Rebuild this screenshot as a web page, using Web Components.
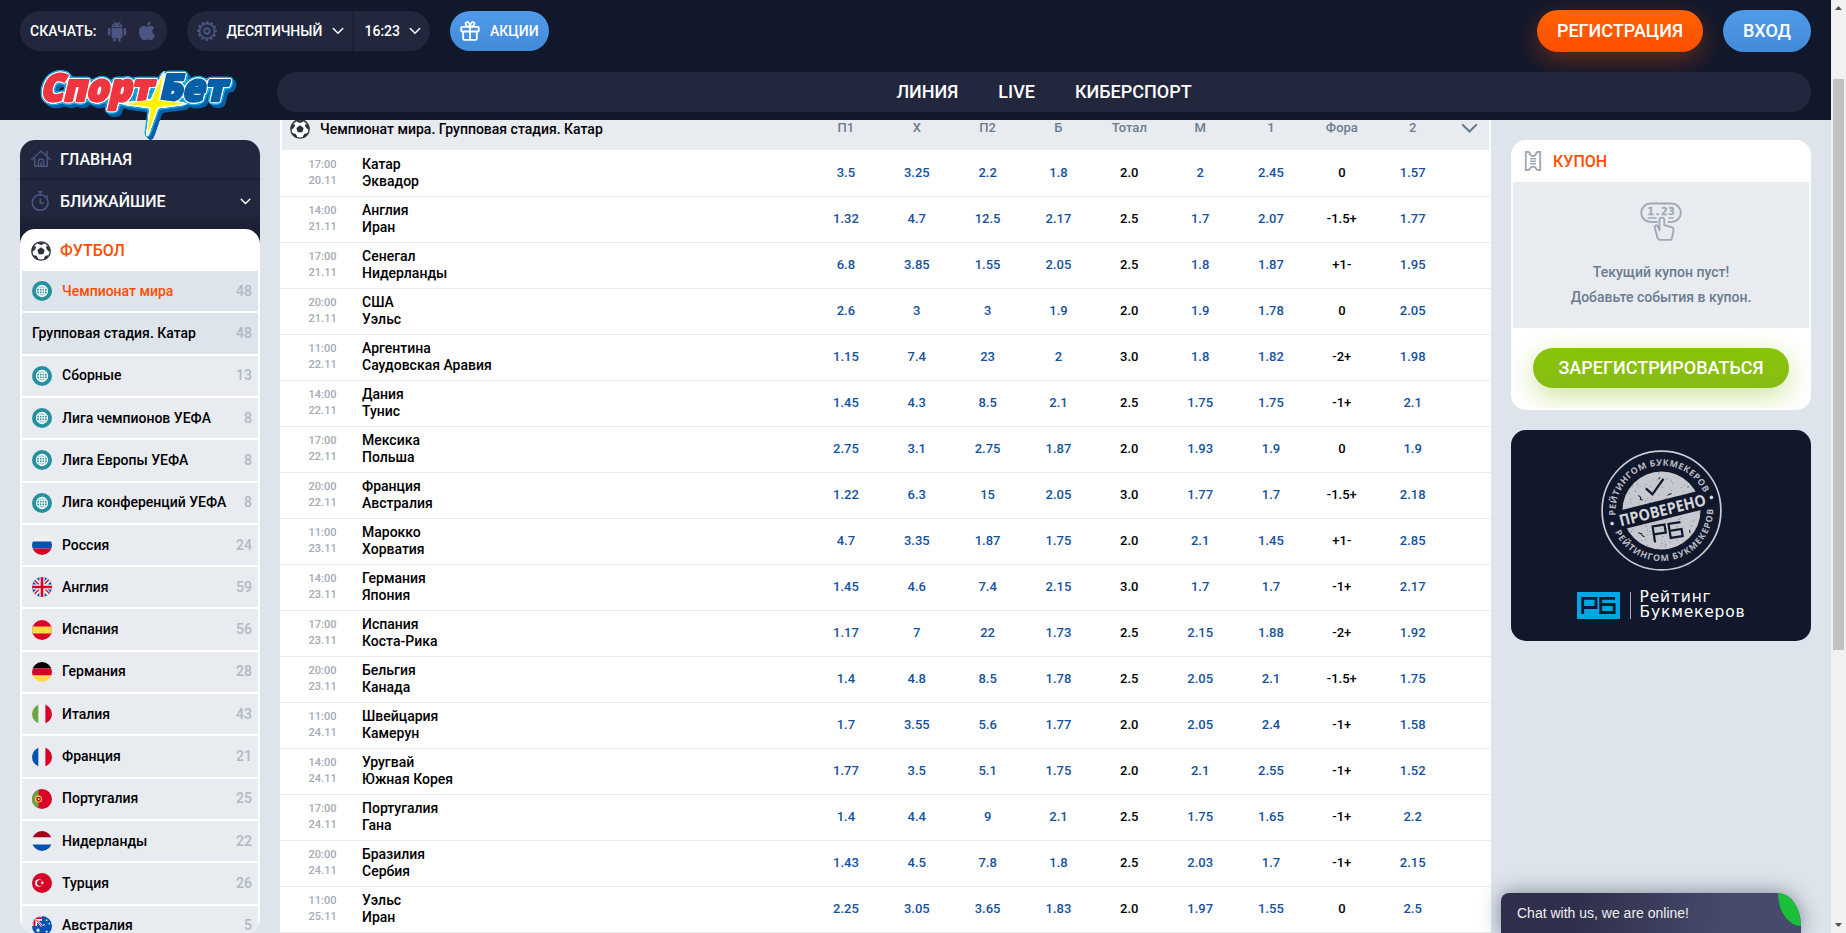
<!DOCTYPE html>
<html lang="ru">
<head>
<meta charset="utf-8">
<title>СпортБет</title>
<style>
html,body{margin:0;height:100%;overflow:hidden}
body{font-family:Roboto,"Liberation Sans",sans-serif;font-weight:500;font-size:14px;color:#000;background:#dde4eb}
</style>
</head>
<body>
<sb-app></sb-app>
<script>
const define=(name,css,html)=>customElements.define(name,class extends HTMLElement{
  constructor(){super();this.attachShadow({mode:'open'})}
  connectedCallback(){
    const body=typeof html==='function'?html(this):html;
    this.shadowRoot.innerHTML=`<style>*{box-sizing:border-box}svg{display:block;flex:none}${css}</style>${body}`;
  }
});
const at=(el,n)=>el.getAttribute(n)||'';

/* ---------- icons ---------- */
const P={
 android:[24,'<g fill="currentColor"><path d="M6 8.8h12v9.4a1.4 1.4 0 0 1-1.4 1.4H7.4A1.4 1.4 0 0 1 6 18.200z"/><path d="M6 8a6 5 0 0 1 12 0z"/><rect x="2" y="8.800" width="2.800" height="8" rx="1.400"/><rect x="19.200" y="8.800" width="2.800" height="8" rx="1.400"/><rect x="8" y="17" width="2.700" height="6.500" rx="1.300"/><rect x="13.300" y="17" width="2.700" height="6.500" rx="1.300"/></g><path d="M8.300 1l1.400 2.600M15.700 1l-1.400 2.600" stroke="currentColor"/><circle cx="9.400" cy="5.700" r=".8" fill="#22273d"/><circle cx="14.600" cy="5.700" r=".8" fill="#22273d"/>'],
 apple:[24,'<g fill="currentColor"><path d="M12.300 6.800c1.100 0 2.300-1 4.200-1 1.700 0 3.400.8 4.500 2.400-3.700 2.200-3.100 7.300.7 8.800-1.300 3.300-3.200 6.200-5.200 6.200-1.500 0-2-.9-3.900-.9s-2.500.9-3.900.9C5.500 23.200 2.300 17.500 2.300 13c0-4.600 2.900-7.100 5.800-7.100 1.800 0 3.200.9 4.200.9z"/><path d="M16.700.3c.3 2.600-1.900 5.100-4.600 5.100-.3-2.500 2-4.900 4.600-5.100z"/></g>'],
 gear:[24,'<g fill="none" stroke="currentColor"><circle cx="12" cy="12" r="3.300" stroke-width="2.200"/><circle cx="12" cy="12" r="8.900" stroke-width="2"/><circle cx="12" cy="12" r="10.700" stroke-width="2.200" stroke-dasharray="3.200 2.402" transform="rotate(-8 12 12)"/></g>'],
 chev:[12,'<path d="M1.300 3.500 6 8.200l4.700-4.700" fill="none" stroke="currentColor" stroke-width="1.500" stroke-linecap="round"/>'],
 gift:[24,'<g fill="none" stroke="currentColor" stroke-width="2.200" stroke-linejoin="round"><rect x="1.500" y="7" width="21" height="5.600" rx="1"/><path d="M3.800 12.600v8.400a1.700 1.700 0 0 0 1.700 1.700h13a1.700 1.700 0 0 0 1.700-1.700v-8.400M12 7v15.500"/><path d="M11.800 7C6 7 5.300 1.300 8.700 1.300c2.100 0 3 2.200 3.200 5.700M12.200 7c5.800 0 6.500-5.700 3.100-5.700-2.100 0-3 2.200-3.200 5.700"/></g>'],
 home:[20,'<g fill="none" stroke="currentColor" stroke-width="1.500" stroke-linejoin="round" stroke-linecap="round"><path d="M.9 10.500 10 2l9.100 8.500M3.700 9.500v7.700h12.600V9.500M16 6.300V2.500M7.400 17v-4.500a2.600 2.600 0 0 1 5.200 0V17M10 14v3"/></g>'],
 timer:[20,'<g fill="none" stroke="currentColor" stroke-width="1.600"><circle cx="9.200" cy="11.500" r="7.900"/><path d="M7 .8h4.500M9.200 1v2M9.200 7.500v4.500h3.600M15.500 4.300l1.500 1.500" /></g>'],
 ball:[20,'<circle cx="10" cy="10" r="9.200" fill="#fff" stroke="#2b2f36" stroke-width="1.300"/><g fill="#2b2f36"><path d="M10 6.300 13.600 9l-1.300 4.200H7.700L6.400 9z"/><path d="M6.800 1.400h6.400L12.700 3 10 4.100 7.300 3zM.8 7.500 4.200 4.500 5 7 3 9.800.9 10.800zM19.200 7.500l-3.400-3L15 7l2 2.800 2.100 1zM2.600 14.300l2.900.4 1.600 2.500-.7 1.600C4.600 18 3.400 16.500 2.600 14.300zM17.400 14.300l-2.900.4-1.600 2.500.7 1.600c1.800-.8 3-2.300 3.800-4.500z"/></g>'],
 ticket:[20,'<path d="M2.800 1h2.800l1.100 1.100c.5 2 1.700 3 3.300 3s2.800-1 3.300-3L14.400 1h2.800v18h-2.800l-1.100-1.100c-.5-1.600-1.700-2.300-3.300-2.300s-2.800.7-3.300 2.300L5.600 19H2.800z" fill="none" stroke="currentColor" stroke-width="1.900"/><path d="M7 7.700h6M7 10.200h6M7 12.700h6" stroke="currentColor" stroke-width="1.500"/>'],
 globe:[20,'<circle cx="10" cy="10" r="10" fill="#2590a0"/><g fill="none" stroke="#fff" stroke-width="1.100"><circle cx="10" cy="10" r="5.600"/><ellipse cx="10" cy="10" rx="2.600" ry="5.600"/><path d="M10 4.400v11.200M4.400 10h11.200M5.200 7.300h9.600M5.200 12.700h9.600"/></g>']
};
const stripes=(a,b,c,v)=>v
 ?`<path fill="#f0f0f0" d="M0 0h20v20H0z"/><path fill="${a}" d="M0 0h6.600v20H0z"/><path fill="${b}" d="M6.600 0h6.800v20H6.600z"/><path fill="${c}" d="M13.400 0H20v20h-6.600z"/>`
 :`<path fill="${a}" d="M0 0h20v6.500H0z"/><path fill="${b}" d="M0 6.500h20v7H0z"/><path fill="${c}" d="M0 13.500h20V20H0z"/>`;
const star=(x,y,r)=>{let d='';for(let i=0;i<10;i++){const a=Math.PI*(i/5-.5),q=i%2?r*.45:r;d+=(i?'L':'M')+(x+q*Math.cos(a)).toFixed(2)+' '+(y+q*Math.sin(a)).toFixed(2)}return `<path fill="#fff" d="${d}z"/>`};
const F={
 ru:stripes('#f0f0f0','#0052b4','#d80027'),
 es:'<path fill="#d80027" d="M0 0h20v20H0z"/><path fill="#ffda44" d="M0 6.500h20v7H0z"/>',
 de:stripes('#000','#d80027','#ffda44'),
 it:stripes('#6da544','#f0f0f0','#d80027',1),
 fr:stripes('#0052b4','#f0f0f0','#d80027',1),
 nl:stripes('#a2001d','#f0f0f0','#0052b4'),
 gb:'<path fill="#0052b4" d="M0 0h20v20H0z"/><path stroke="#f0f0f0" stroke-width="4.600" d="m0 0 20 20M20 0 0 20"/><path stroke="#d80027" stroke-width="1.300" d="m0 .8 7 7M19.500 0l-7 7M0 19.500l7-7M20 19l-7-7"/><path stroke="#f0f0f0" stroke-width="5.200" d="M10 0v20M0 10h20"/><path stroke="#d80027" stroke-width="2.600" d="M10 0v20M0 10h20"/>',
 pt:'<path fill="#d80027" d="M0 0h20v20H0z"/><path fill="#6da544" d="M0 0h6.600v20H0z"/><circle cx="6.600" cy="10" r="3.500" fill="#ffda44"/><path fill="#d80027" d="M4.400 8h4.400v2.500a2.200 2.200 0 0 1-4.400 0z"/><path fill="#f0f0f0" d="M5.900 9.200h1.500v1.900H5.900z"/>',
 tr:'<path fill="#d80027" d="M0 0h20v20H0z"/><circle cx="6.800" cy="10" r="3.700" fill="#fff"/><circle cx="7.900" cy="10" r="2.900" fill="#d80027"/>'+star(10.300,10,1.900),
 au:'<path fill="#0052b4" d="M0 0h20v20H0z"/><path fill="#f0f0f0" d="M0 0h10v10H0z"/><path fill="#d80027" d="M1.500 1.300h8.500v1.800H3.400V10H1.500z"/><path fill="#0052b4" d="M5 4.700h5V10H5z"/><path stroke="#f0f0f0" stroke-width="2.400" d="m4.500 4 5.500 6"/><path stroke="#d80027" d="m4.500 4 5.500 6"/>'+star(6,14.300,2.500)+star(14.600,4.300,1.200)+star(12,9,1.200)+star(17.300,7.800,1.200)+star(14.600,15.500,1.500)
};
define('sb-icon',':host{display:block;flex:none}',el=>{
 const n=at(el,'name'),s=at(el,'size')||20;
 if(P[n])return `<svg width="${s}" height="${s}" viewBox="0 0 ${P[n][0]} ${P[n][0]}">${P[n][1]}</svg>`;
 return `<svg width="${s}" height="${s}" viewBox="0 0 20 20"><defs><clipPath id="c"><circle cx="10" cy="10" r="10"/></clipPath></defs><g clip-path="url(#c)">${F[n]}</g></svg>`;
});

/* ---------- logo: one lettering group, its outlines grown by a filter ---------- */
define('sb-logo',':host{display:block;width:215px;height:86px}',()=>{
 const grow=(src,dev,slope,cut,color,res)=>`<feGaussianBlur in="${src}" stdDeviation="${dev}" result="${res}b"/><feComponentTransfer in="${res}b" result="${res}t"><feFuncA type="linear" slope="${slope}" intercept="${cut}"/></feComponentTransfer><feFlood flood-color="${color}"/><feComposite in2="${res}t" operator="in" result="${res}"/>`;
 return `<svg width="215" height="86" viewBox="0 0 215 86" font-family="'Open Sans','Noto Sans',sans-serif" font-weight="800" font-size="37.500" stroke-linejoin="round">
 <defs><filter id="o" x="-5" y="-5" width="225" height="96" filterUnits="userSpaceOnUse" color-interpolation-filters="sRGB">
 ${grow('SourceAlpha',1.3,9,-.9,'#ffffff','w')}
 ${grow('w',1.4,9,-.9,'#18a6e0','c')}
 <feOffset in="c" dx="1" dy="1" result="s1"/><feOffset in="c" dx="2.500" dy="2.500" result="s2"/><feMerge result="s"><feMergeNode in="s1"/><feMergeNode in="s2"/></feMerge>
 <feFlood flood-color="#0560a8"/><feComposite in2="s" operator="in" result="d"/>
 <feMerge><feMergeNode in="d"/><feMergeNode in="c"/><feMergeNode in="w"/><feMergeNode in="SourceGraphic"/></feMerge></filter></defs>
 <g filter="url(#o)"><g transform="translate(0 41) skewX(-13)" stroke-width="2.600"><text x="10" y="0" fill="#ee3640" stroke="#ee3640" textLength="112" lengthAdjust="spacingAndGlyphs">Спорт</text>
 <text x="128.500" y="0" fill="#0560a8" stroke="#0560a8" textLength="67.500" lengthAdjust="spacingAndGlyphs">Бет</text></g>
 <path d="M134 11 129 40 157 43.800 127.500 47.500 117.500 76 116.800 76 120.500 47.500 92 43.800 121.500 40z" fill="#fff200"/></g>
 <path d="M134 11 129 40 157 43.800 127.500 47.500 117.500 76 116.800 76 120.500 47.500 92 43.800 121.500 40z" fill="#fff200" stroke="#fff" stroke-width=".8"/></svg>`;
});

/* ---------- header ---------- */
define('sb-pill',`:host{display:flex;align-items:center;height:40px;border-radius:20px;background:#22273d;color:#fff;line-height:1}
:host([tone=blue]){background:linear-gradient(#4f9aea,#428bd9)}
:host([tone=orange]){background:linear-gradient(#ff6200,#ff4e00);box-shadow:0 8px 24px rgba(255,80,0,.35)}
:host([big]){height:42px;border-radius:21px;font-size:18px;justify-content:center}`,'<slot></slot>');
define('sb-header',`:host{display:block;height:120px;background:#12182b;color:#fff;position:relative;z-index:2}
.top{display:flex;height:62px;padding:11px 20px 0 20px;align-items:flex-start}
.bottom{display:flex;align-items:flex-start;height:58px}
.muted{color:#4a5582}.sp{flex:1}
.nav{display:flex;justify-content:center;align-items:center;gap:40px;margin-top:10px;width:1534px;height:40px;padding-bottom:2px;border-radius:20px;background:#22273d;font-size:18px;margin-left:32px}
sb-logo{margin:-2px 0 0 30px}
i{width:2px;height:40px;background:#1b2034}`,`
<div class="top">
<sb-pill style="width:147px;padding-left:10px"><span style="width:76px">СКАЧАТЬ:</span><sb-icon class="muted" name="android" size="22"></sb-icon><sb-icon class="muted" name="apple" size="20" style="margin-left:9px"></sb-icon></sb-pill>
<sb-pill style="width:243px;margin-left:20px;padding-left:10px"><sb-icon class="muted" name="gear" size="20"></sb-icon><span style="width:107px;padding-left:9.500px">ДЕСЯТИЧНЫЙ</span><sb-icon name="chev" size="12" style="margin:0 8px 0 8px"></sb-icon><i></i><span style="width:55px;padding-left:10.500px">16:23</span><sb-icon name="chev" size="12"></sb-icon></sb-pill>
<sb-pill tone="blue" style="width:99px;margin-left:20px;padding-left:10px"><sb-icon name="gift" size="20"></sb-icon><span style="padding-left:10px">АКЦИИ</span></sb-pill>
<span class="sp"></span>
<sb-pill big tone="orange" style="width:166px;margin-top:-1px">РЕГИСТРАЦИЯ</sb-pill>
<sb-pill big tone="blue" style="width:88px;margin:-1px 0 0 20px">ВХОД</sb-pill>
</div>
<div class="bottom"><sb-logo></sb-logo><div class="nav"><span>ЛИНИЯ</span><span>LIVE</span><span>КИБЕРСПОРТ</span></div></div>`);

/* ---------- sidebar ---------- */
define('sb-league',`:host{display:flex;align-items:center;height:40.3px;margin:0 2px 2px;padding:0 6px 0 10px;background:#e8ebf0;line-height:16px}
:host([open]){background:#dde4eb}.n,.c{padding-bottom:1px}.n{flex:1;padding-left:10px}:host(:not([icon])) .n{padding-left:0}:host([active]) .n{color:#ff4e00}
.c{color:#b0b9c4}`,el=>`${at(el,'icon')?`<sb-icon name="${at(el,'icon')}"></sb-icon>`:''}<span class="n"><slot></slot></span><span class="c">${at(el,'count')}</span>`);
const leagues=[['globe','Чемпионат мира',48,'open active'],['','Групповая стадия. Катар',48,'open'],['globe','Сборные',13],['globe','Лига чемпионов УЕФА',8],['globe','Лига Европы УЕФА',8],['globe','Лига конференций УЕФА',8],['ru','Россия',24],['gb','Англия',59],['es','Испания',56],['de','Германия',28],['it','Италия',43],['fr','Франция',21],['pt','Португалия',25],['nl','Нидерланды',22],['tr','Турция',26],['au','Австралия',5]];
define('sb-sidebar',`:host{display:block;width:240px;height:793px;border-radius:15px;overflow:hidden;color:#fff;font-size:16px}
.r{display:flex;align-items:center;gap:9px;height:38px;padding:0 9.500px 0 11px;background:#22273d}
.r+.r{border-top:2px solid #1b2034;height:51px;padding-bottom:7px;background:linear-gradient(#22273d 70%,#191e32)}
.bg{background:linear-gradient(#191e32 20px,#fff 20px)}
.card{background:#fff;border-radius:15px 15px 0 0;height:720px;overflow:hidden;color:#000;font-size:14px}
.h{display:flex;align-items:center;gap:9px;height:42.100px;padding:1px 11px 0;color:#ff4e00;font-size:16px}.m{color:#4a5582}`,
`<div class="r"><sb-icon class="m" name="home"></sb-icon>ГЛАВНАЯ</div><div class="r"><sb-icon class="m" name="timer"></sb-icon><span style="flex:1">БЛИЖАЙШИЕ</span><sb-icon name="chev" size="11"></sb-icon></div>
<div class="bg"><div class="card"><div class="h"><sb-icon name="ball"></sb-icon>ФУТБОЛ</div>${leagues.map(l=>`<sb-league ${l[0]?`icon="${l[0]}"`:''} count="${l[2]}" ${l[3]||''}>${l[1]}</sb-league>`).join('')}</div></div>`);

/* ---------- odds table ---------- */
const games=`17:00|20.11|Катар|Эквадор|3.5 3.25 2.2 1.8 2.0 2 2.45 0 1.57
14:00|21.11|Англия|Иран|1.32 4.7 12.5 2.17 2.5 1.7 2.07 -1.5+ 1.77
17:00|21.11|Сенегал|Нидерланды|6.8 3.85 1.55 2.05 2.5 1.8 1.87 +1- 1.95
20:00|21.11|США|Уэльс|2.6 3 3 1.9 2.0 1.9 1.78 0 2.05
11:00|22.11|Аргентина|Саудовская Аравия|1.15 7.4 23 2 3.0 1.8 1.82 -2+ 1.98
14:00|22.11|Дания|Тунис|1.45 4.3 8.5 2.1 2.5 1.75 1.75 -1+ 2.1
17:00|22.11|Мексика|Польша|2.75 3.1 2.75 1.87 2.0 1.93 1.9 0 1.9
20:00|22.11|Франция|Австралия|1.22 6.3 15 2.05 3.0 1.77 1.7 -1.5+ 2.18
11:00|23.11|Марокко|Хорватия|4.7 3.35 1.87 1.75 2.0 2.1 1.45 +1- 2.85
14:00|23.11|Германия|Япония|1.45 4.6 7.4 2.15 3.0 1.7 1.7 -1+ 2.17
17:00|23.11|Испания|Коста-Рика|1.17 7 22 1.73 2.5 2.15 1.88 -2+ 1.92
20:00|23.11|Бельгия|Канада|1.4 4.8 8.5 1.78 2.5 2.05 2.1 -1.5+ 1.75
11:00|24.11|Швейцария|Камерун|1.7 3.55 5.6 1.77 2.0 2.05 2.4 -1+ 1.58
14:00|24.11|Уругвай|Южная Корея|1.77 3.5 5.1 1.75 2.0 2.1 2.55 -1+ 1.52
17:00|24.11|Португалия|Гана|1.4 4.4 9 2.1 2.5 1.75 1.65 -1+ 2.2
20:00|24.11|Бразилия|Сербия|1.43 4.5 7.8 1.8 2.5 2.03 1.7 -1+ 2.15
11:00|25.11|Уэльс|Иран|2.25 3.05 3.65 1.83 2.0 1.97 1.55 0 2.5`.split('\n').map(r=>r.split('|'));
define('sb-game',`:host{display:grid;grid-template-columns:82px 448.500px repeat(9,70.850px) 1fr;height:46px;padding-bottom:2px;border-bottom:1px solid #e8ebf0;align-items:center;line-height:17px}
.t{font-size:11px;line-height:16px;color:#a2abb6;padding-left:28.500px;letter-spacing:.05px}
.o{text-align:center;font-size:13px;color:#1452a0}.k{color:#000}`,el=>{
 const g=games[at(el,'index')];
 return `<div class="t">${g[0]}<br>${g[1]}</div><div>${g[2]}<br>${g[3]}</div>${g[4].split(' ').map((o,i)=>`<div class="o${i==4||i==7?' k':''}">${o}</div>`).join('')}`;
});
define('sb-table',`:host{display:block;width:1211px;height:813px;background:#fff;overflow:hidden}
.h{display:grid;grid-template-columns:528.500px repeat(9,70.850px) 1fr;height:30px;margin:0 2px 1px;background:#e8ebf0;color:#6b7c8f;font-size:13px;text-align:center;line-height:16px}
.h>.name{margin-top:-1px}.name{display:flex;gap:10px;padding-left:8px;align-items:center;height:20px;color:#000;font-size:14px}
sb-icon.v{margin:0 0 0 12.500px}`,
`<div class="h"><div class="name"><sb-icon name="ball"></sb-icon>Чемпионат мира. Групповая стадия. Катар</div>${['П1','X','П2','Б','Тотал','М','1','Фора','2'].map(t=>`<span>${t}</span>`).join('')}<sb-icon class="v" name="chev" size="17"></sb-icon></div>
${games.map((g,i)=>`<sb-game index="${i}"></sb-game>`).join('')}`);

/* ---------- coupon and partner cards ---------- */
define('sb-coupon',`:host{display:block;width:300px;height:270px;border-radius:15px;background:#fff;overflow:hidden;border:0 solid #fff;border-width:0 2px 2px}
.h{display:flex;align-items:center;gap:10px;height:42px;padding:0 10px;color:#ff4e00;font-size:16px}.h sb-icon{color:#9fa9b7}
.b{display:flex;flex-direction:column;align-items:center;height:146px;background:#e8ebf0;padding-top:20px;color:#6b7c8f;line-height:25px}
.f{padding:20px;height:80px;overflow:hidden}
.btn{display:flex;align-items:center;justify-content:center;height:40px;padding-bottom:2px;border-radius:20px;background:linear-gradient(#88c409,#88bc14);box-shadow:0 8px 28px rgba(136,190,20,.42);color:#fff;font-size:18px}`,
`<div class="h"><sb-icon name="ticket"></sb-icon>КУПОН</div>
<div class="b"><svg width="42" height="42" viewBox="0 0 42 42" style="margin-bottom:15.500px" fill="none" stroke="#9fa9b7" stroke-width="1.900" stroke-linejoin="round" stroke-linecap="round"><path d="M17 20h-6.500a9.250 9.250 0 0 1 0-18.500h21a9.250 9.250 0 0 1 0 18.500H28.500"/><path d="M8.500 16h7.500M29 16h4" stroke-width="1.600"/><path d="M19.500 28.300v-10.300a2.400 2.400 0 0 1 4.800 0v5.200l7.200 2c1.700.5 2.200 1.600 2 3.200L32 35.900c-.2 1.500-.9 2-2.200 2h-9.600c-1.400 0-2.100-.6-2.600-2l-2.900-10.300c-.4-2.400 2-3.200 3.200-1.200z"/><text x="7.500" y="12.500" font-size="10.500" font-weight="700" font-family="'DejaVu Sans Mono',monospace" fill="#9fa9b7" stroke="#9fa9b7" stroke-width=".4" textLength="27">1.23</text></svg><span>Текущий купон пуст!</span><span>Добавьте события в купон.</span></div>
<div class="f"><div class="btn">ЗАРЕГИСТРИРОВАТЬСЯ</div></div>`);

define('sb-rating',`:host{display:flex;flex-direction:column;align-items:center;width:300px;height:211px;border-radius:15px;background:#12182b;padding-top:20px;color:#fff}
.l{display:flex;align-items:center;margin-top:20px;height:28px}.l i{width:1px;height:27px;background:#aab;margin:0 9px 0 10px}
.l span{font:15.500px/15px "DejaVu Sans",sans-serif;letter-spacing:.8px}`,()=>{
 let specks='';let s=7;const rnd=()=>(s=(s*16807)%2147483647)/2147483647;
 for(let i=0;i<150;i++){const a=rnd()*6.283,r=Math.sqrt(rnd())*38;specks+=`<circle cx="${(60+r*Math.cos(a)).toFixed(1)}" cy="${(60+r*Math.sin(a)).toFixed(1)}" r="${(.3+rnd()*.35).toFixed(2)}"/>`}
 return `<svg width="121" height="121" viewBox="0 0 120 120" font-family="'Open Sans',Roboto,sans-serif" font-weight="700">
 <defs><path id="u" d="M14.400 64.800A46 46 0 0 1 105.300 52"/><path id="d" d="M12.800 79.500A51.500 51.500 0 0 0 110.800 51"/></defs>
 <circle cx="60" cy="60" r="58.900" fill="none" stroke="#c9ccd3" stroke-width="1.700"/><circle cx="60" cy="60" r="38.700" fill="#c6c9d0"/><g fill="#737887">${specks}</g>
 <g font-size="8.800" fill="#b9bcc5"><text><textPath href="#u" textLength="128">РЕЙТИНГОМ БУКМЕКЕРОВ</textPath></text><text><textPath href="#d" startOffset="2" textLength="138">РЕЙТИНГОМ БУКМЕКЕРОВ</textPath></text></g>
 <circle cx="11" cy="73" r="1.800" fill="#d4d6dc"/><circle cx="109.500" cy="47" r="1.800" fill="#d4d6dc"/>
 <g transform="rotate(-14 60 60)"><path d="M19 50h84v19H19z" fill="#12182b"/><text x="17" y="65.500" font-size="15.500" fill="#d4d6dc" textLength="88" lengthAdjust="spacingAndGlyphs">ПРОВЕРЕНО</text></g>
 <g fill="none" stroke="#12182b"><path d="m44.500 38 6.500 6 11-15.500" stroke-width="2.200"/><path d="m37 45 2.500 2-.5 2 2.500.5M57 29l1.500-2M66 45l4-2M37 82l3 1 1 2 2 1M88 82v-3" /><g transform="translate(50 75) rotate(-9)" stroke-width="2.200"><path d="M1 17V1h12v8H1M29 1H17v14h12V8H17"/></g></g></svg>
 <div class="l"><svg width="43" height="27"><path fill="#00a5e6" d="M0 0h43v27H0z"/><path fill="none" stroke="#12182b" stroke-width="2.800" d="M5.700 22V6.300H19v9.200H5.700M38 6.300H23.700V20.500h13.500v-8H23.700"/></svg><i></i><span>Рейтинг<br>Букмекеров</span></div>`;
});

/* ---------- chat and scrollbar ---------- */
define('sb-chat',`:host{display:flex;justify-content:space-between;position:absolute;left:1501px;bottom:0;width:300px;height:40px;border-radius:8px 23px 0 0/8px 33px 0 0;background:linear-gradient(100deg,#302f4b 25%,#464a6b 75%);box-shadow:0 0 20px rgba(30,40,60,.5);overflow:hidden;color:#eee;font:14px/40px "Liberation Sans",sans-serif;z-index:3;padding-left:16px}
i{width:23px;height:33px;background:#1bc03a;border-radius:0 23px 0 23px/0 33px 0 33px}`,'<span>Chat with us, we are online!</span><i></i>');
define('sb-scrollbar',`:host{display:flex;flex-direction:column;width:15px;height:933px;background:#f1f1f1;align-items:center}
b{width:7px;height:4px;background:#505050;clip-path:polygon(50% 0,100% 100%,0 100%)}b+i+b{transform:scaleY(-1)}i{width:11px;height:571px;background:#c1c1c1;margin:69px 0 273px}`,'<b style="margin-top:6px"></b><i></i><b></b>');
define('sb-app',`:host{display:flex;width:1846px;height:933px;overflow:hidden}
.page{width:1831px;position:relative}.cols{display:flex;align-items:flex-start;padding-left:20px}
sb-sidebar{margin:20px 20px 0 0}.right{display:flex;flex-direction:column;gap:20px;margin:20px 0 0 20px}`,
`<div class="page"><sb-header></sb-header><div class="cols"><sb-sidebar></sb-sidebar><sb-table></sb-table><div class="right"><sb-coupon></sb-coupon><sb-rating></sb-rating></div></div><sb-chat></sb-chat></div><sb-scrollbar></sb-scrollbar>`);
</script>
</body>
</html>
